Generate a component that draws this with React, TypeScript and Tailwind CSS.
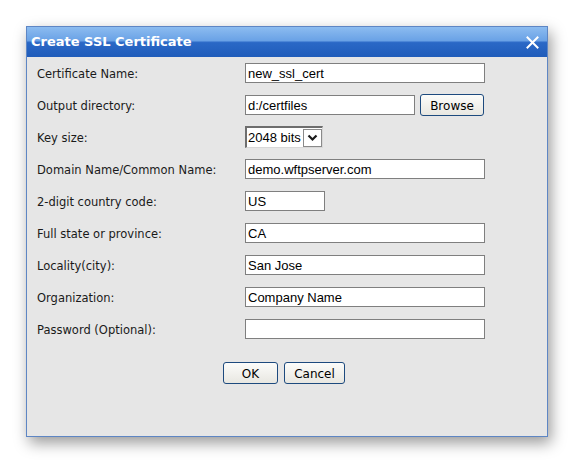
import React from "react";

const labelFont = { fontFamily: '"DejaVu Sans", Verdana, sans-serif' };

function TextInput({ value, w = "w-[240px]" }: { value: string; w?: string }) {
  return (
    <div
      className={`${w} h-[20px] bg-white border border-[#7f7f7f] flex items-center px-[2px] text-[13px] text-black leading-none`}
      style={{ fontFamily: '"Liberation Sans", Arial, sans-serif' }}
    >
      {value}
    </div>
  );
}

function Btn({ children, w }: { children: React.ReactNode; w: string }) {
  return (
    <div
      className={`${w} h-[22px] rounded-[3px] border border-[#1d4a7e] bg-gradient-to-b from-[#fcfcfa] to-[#e8e7e1] flex items-center justify-center pt-[1px] text-[12px] text-black`}
      style={labelFont}
    >
      {children}
    </div>
  );
}

function Row({ label, children }: { label: string; children: React.ReactNode }) {
  return (
    <div className="h-[32px] flex items-center">
      <div className="w-[208px] pt-[3px] text-[11.5px] text-[#1a1a1a]" style={labelFont}>
        {label}
      </div>
      <div className="flex items-center">{children}</div>
    </div>
  );
}

export default function App() {
  return (
    <div className="w-[574px] h-[464px] bg-white pt-[26px] pl-[26px]">
      <div className="w-[522px] h-[411px] border border-[#5e86c4] bg-[#e6e6e6] flex flex-col shadow-[3px_6px_14px_rgba(0,0,0,0.4)]">
        <div className="h-[30px] flex items-center justify-between pl-[4px] pr-[8px] bg-[linear-gradient(to_bottom,#8cbcf0_0%,#6aa2e6_45%,#2a68c6_52%,#1f5cba_100%)]">
          <span className="text-white font-bold text-[13px] -mt-[1px]" style={labelFont}>
            Create SSL Certificate
          </span>
          <svg width="13" height="13" viewBox="0 0 13 13">
            <path d="M1.5 1.5 L11.5 11.5 M11.5 1.5 L1.5 11.5" stroke="white" strokeWidth="2" strokeLinecap="square" />
          </svg>
        </div>
        <div className="pl-[10px] flex flex-col">
          <Row label="Certificate Name:">
            <TextInput value="new_ssl_cert" />
          </Row>
          <Row label="Output directory:">
            <TextInput value="d:/certfiles" w="w-[170px]" />
            <div className="ml-[5px]">
              <Btn w="w-[64px]">Browse</Btn>
            </div>
          </Row>
          <Row label="Key size:">
            <div
              className="w-[78px] h-[22px] bg-white flex items-center border-l-2 border-t-2 border-l-[#6e6e6e] border-t-[#6e6e6e] border-r border-b border-r-[#d8d8d8] border-b-[#d8d8d8] text-[13px] text-black"
              style={{ fontFamily: '"Liberation Sans", Arial, sans-serif' }}
            >
              <span className="pl-[1px] flex-1">2048 bits</span>
              <div className="w-[19px] h-[18px] border border-[#8a8a8a] bg-white flex items-center justify-center">
                <svg width="11" height="8" viewBox="0 0 11 8">
                  <path d="M1.5 1.5 L5.5 5.5 L9.5 1.5" stroke="#1a1a1a" strokeWidth="2.2" fill="none" />
                </svg>
              </div>
            </div>
          </Row>
          <Row label="Domain Name/Common Name:">
            <TextInput value="demo.wftpserver.com" />
          </Row>
          <Row label="2-digit country code:">
            <TextInput value="US" w="w-[80px]" />
          </Row>
          <Row label="Full state or province:">
            <TextInput value="CA" />
          </Row>
          <Row label="Locality(city):">
            <TextInput value="San Jose" />
          </Row>
          <Row label="Organization:">
            <TextInput value="Company Name" />
          </Row>
          <Row label="Password (Optional):">
            <TextInput value="" />
          </Row>
        </div>
        <div className="mt-[17px] flex justify-center gap-[6px] pr-[6px]">
          <Btn w="w-[55px]">OK</Btn>
          <Btn w="w-[61px]">Cancel</Btn>
        </div>
      </div>
    </div>
  );
}
